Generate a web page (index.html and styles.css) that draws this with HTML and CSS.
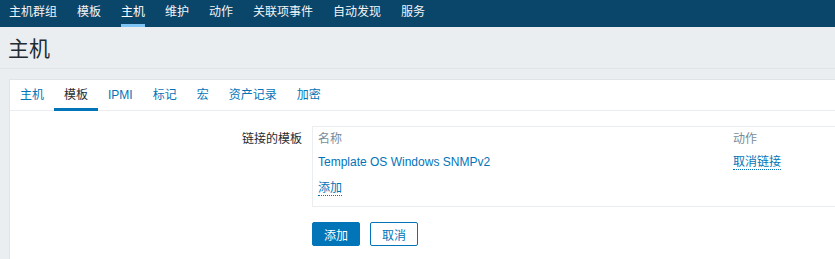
FILE: index.html
```html
<!DOCTYPE html>
<html lang="zh">
<head>
    <meta charset="UTF-8">
    <meta name="viewport" content="width=device-width, initial-scale=1.0">
    <title>主机</title>
    <link rel="stylesheet" href="styles.css">
</head>
<body>
    <header class="top-nav">
        <ul class="top-menu">
            <li><a href="#">主机群组</a></li>
            <li><a href="#">模板</a></li>
            <li class="selected"><a href="#">主机</a></li>
            <li><a href="#">维护</a></li>
            <li><a href="#">动作</a></li>
            <li><a href="#">关联项事件</a></li>
            <li><a href="#">自动发现</a></li>
            <li><a href="#">服务</a></li>
        </ul>
    </header>

    <div class="header-title">
        <h1>主机</h1>
    </div>

    <main class="wrapper">
        <div class="card">
            <ul class="tabs">
                <li><a href="#">主机</a></li>
                <li class="active"><a href="#">模板</a></li>
                <li><a href="#">IPMI</a></li>
                <li><a href="#">标记</a></li>
                <li><a href="#">宏</a></li>
                <li><a href="#">资产记录</a></li>
                <li><a href="#">加密</a></li>
            </ul>

            <form class="form-grid">
                <label class="form-label">链接的模板</label>
                <div class="form-field">
                    <div class="linked-box">
                        <table class="linked-table">
                            <thead>
                                <tr>
                                    <th class="col-name">名称</th>
                                    <th>动作</th>
                                </tr>
                            </thead>
                            <tbody>
                                <tr>
                                    <td class="col-name"><a class="link" href="#">Template OS Windows SNMPv2</a></td>
                                    <td><a class="link-action" href="#">取消链接</a></td>
                                </tr>
                            </tbody>
                        </table>
                        <div class="add-row"><a class="link-action" href="#">添加</a></div>
                    </div>
                </div>

                <div></div>
                <div class="buttons">
                    <button type="submit" class="btn">添加</button>
                    <button type="button" class="btn-alt">取消</button>
                </div>
            </form>
        </div>
    </main>
</body>
</html>
```

FILE: styles.css
```css
html {
    overflow: hidden;
}

body {
    margin: 0;
    font-family: "Liberation Sans", Arial, "Noto Sans CJK SC", sans-serif;
    font-size: 12px;
    line-height: 14px;
    color: #1f2c33;
    background-color: #ebeef0;
    min-width: 900px;
}

a {
    text-decoration: none;
}

ul {
    list-style: none;
    margin: 0;
    padding: 0;
}

/* верхнее меню */
.top-nav {
    background-color: #0a466a;
    height: 27px;
    padding: 0 9px;
}

.top-menu {
    display: flex;
    gap: 20px;
}

    .top-menu li {
        padding: 5px 0;
        border-bottom: 3px solid transparent;
    }

    .top-menu a {
        color: #f2f4f5;
    }

    .top-menu .selected {
        border-bottom-color: #7ec5f5;
    }

        .top-menu .selected a {
            color: #ffffff;
        }

/* заголовок страницы */
.header-title {
    padding: 10px 9px 7px 8px;
    border-bottom: 1px solid #dfe4e7;
}

    .header-title h1 {
        margin: 0;
        font-size: 21px;
        line-height: 24px;
        font-weight: normal;
        color: #1f2c33;
    }

.wrapper {
    padding: 10px 0 0 9px;
}

.card {
    background-color: #ffffff;
    border: 1px solid #dfe4e7;
    border-right: none;
    border-bottom: none;
    height: 180px;
}

/* вкладки */
.tabs {
    display: flex;
    border-bottom: 1px solid #ebeef0;
}

    .tabs li {
        padding: 8px 10px 6px;
        border-bottom: 3px solid transparent;
        margin-bottom: -1px;
    }

    .tabs a {
        color: #0275b8;
    }

    .tabs .active {
        border-bottom-color: #0275b8;
    }

        .tabs .active a {
            color: #1f2c33;
        }

/* форма */
.form-grid {
    display: grid;
    grid-template-columns: 292px 1fr;
    column-gap: 10px;
    row-gap: 15px;
    padding-top: 15px;
}

.form-label {
    text-align: right;
    padding-top: 6px;
    color: #1f2c33;
}

.linked-box {
    width: 560px;
    border: 1px solid #ebeef0;
}

.linked-table {
    border-collapse: collapse;
    width: 100%;
}

    .linked-table th,
    .linked-table td {
        padding: 5px 5px 4px;
        text-align: left;
        font-weight: normal;
    }

    .linked-table th {
        color: #768d99;
    }

    .linked-table .col-name {
        width: 405px;
    }

.link {
    color: #0275b8;
}

.link-action {
    color: #0275b8;
    border-bottom: 1px dotted #0275b8;
}

.add-row {
    padding: 8px 5px 11px;
}

.buttons {
    display: flex;
    gap: 10px;
}

.btn, .btn-alt {
    font-family: inherit;
    font-size: 12px;
    height: 24px;
    padding: 0 11px;
    border-radius: 2px;
    border: 1px solid #0275b8;
    cursor: pointer;
}

.btn {
    background-color: #0275b8;
    color: #ffffff;
}

    .btn:hover {
        background-color: #0068a3;
    }

.btn-alt {
    background-color: #ffffff;
    color: #0275b8;
}
```
